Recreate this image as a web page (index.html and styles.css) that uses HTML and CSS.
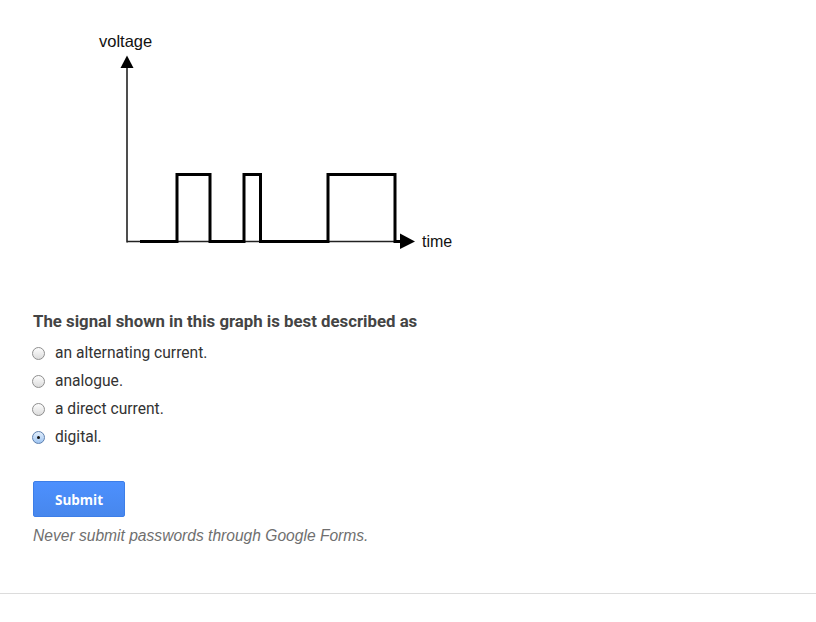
FILE: index.html
```html
<!DOCTYPE html>
<html lang="en">
<head>
  <meta charset="UTF-8" />
  <meta name="viewport" content="width=device-width, initial-scale=1.0"/>
  <title>Quiz</title>
  <link rel="stylesheet" href="styles.css">
</head>
<body>
  <div class="form">
    <div class="graph">
      <svg width="365" height="225" viewBox="0 0 365 225">
        <text x="4" y="17" class="label">voltage</text>
        <line x1="32" y1="37" x2="32" y2="212.5" stroke="#222" stroke-width="1.6"/>
        <polygon points="32,25.5 25.5,38 38.5,38" fill="#000"/>
        <line x1="32" y1="211.5" x2="306" y2="211.5" stroke="#222" stroke-width="1.6"/>
        <polygon points="305,203.5 320,211.5 305,219" fill="#000"/>
        <polyline points="45,211.5 82,211.5 82,144.5 115,144.5 115,211.5 149,211.5 149,144.5 165.5,144.5 165.5,211.5 233,211.5 233,144.5 300,144.5 300,211.5 306,211.5"
          fill="none" stroke="#000" stroke-width="3"/>
        <text x="327" y="217" class="label small">time</text>
      </svg>
    </div>

    <div class="question">The signal shown in this graph is best described as</div>
    <ul class="options">
      <li><span class="radio"></span>an alternating current.</li>
      <li><span class="radio"></span>analogue.</li>
      <li><span class="radio"></span>a direct current.</li>
      <li><span class="radio checked"></span>digital.</li>
    </ul>

    <button class="submit">Submit</button>
    <p class="note">Never submit passwords through Google Forms.</p>
  </div>
  <hr class="divider">
</body>
</html>
```

FILE: styles.css
```css
body {
  margin: 0;
  background-color: #fff;
  font-family: Roboto, Arial, sans-serif;
  color: #444;
}
.form {
  padding: 30px 0 0 33px;
}
.graph {
  margin-left: 62px;
  height: 225px;
}
.graph svg {
  display: block;
}
.label {
  font-family: "Liberation Sans", Arial, sans-serif;
  font-size: 16.5px;
  fill: #111;
}
.label.small {
  font-size: 16px;
}
.question {
  margin-top: 56px;
  font-size: 16.8px;
  line-height: 20px;
  font-weight: bold;
  color: #444;
}
.options {
  list-style: none;
  margin: 8px 0 0 0;
  padding: 0;
}
.options li {
  display: flex;
  align-items: center;
  height: 28px;
  font-size: 15.6px;
  color: #333;
}
.radio {
  box-sizing: border-box;
  width: 13px;
  height: 13px;
  margin-left: -1px;
  margin-right: 10px;
  border: 1px solid #8e8e8e;
  border-radius: 50%;
  background: linear-gradient(#fdfdfd, #dcdcdc);
  position: relative;
}
.radio.checked {
  border-color: #5d7fae;
  background: linear-gradient(#e3effc, #9fc5f2);
}
.radio.checked::after {
  content: "";
  position: absolute;
  left: 4px;
  top: 4px;
  width: 3px;
  height: 3px;
  border-radius: 50%;
  background: #111;
}
.submit {
  display: block;
  margin-top: 30px;
  width: 92px;
  height: 36px;
  padding-top: 3px;
  border: 1px solid #3d7ee8;
  border-radius: 2px;
  background: linear-gradient(#4d90fe, #4787ed);
  color: #fff;
  font-family: "Open Sans", Arial, sans-serif;
  font-weight: bold;
  font-size: 13.5px;
  cursor: pointer;
}
.note {
  margin: 10px 0 0 0;
  font-family: "Liberation Sans", Arial, sans-serif;
  font-style: italic;
  font-size: 15.6px;
  line-height: 18px;
  color: #6f6f6f;
}
.divider {
  margin: 48px 0 0 0;
  border: none;
  border-top: 1px solid #dcdcdc;
}
```
